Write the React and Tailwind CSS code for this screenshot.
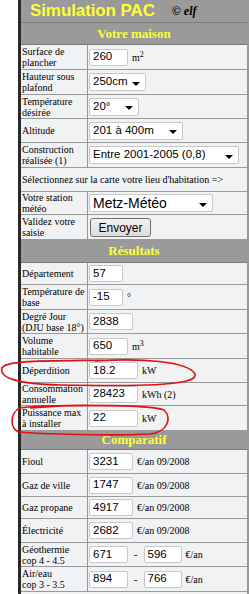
import React from 'react';

const serif = { fontFamily: '"Liberation Serif", "Times New Roman", serif' };

function Field({ value, w }) {
  return (
    <div
      className={`${w} h-[17px] bg-white border border-[#c8c8c8] rounded-[2px] flex items-center pl-[3px] text-[11.5px] text-black font-['Liberation_Sans',Arial,sans-serif]`}
    >
      {value}
    </div>
  );
}

function Select({ value, w, big }) {
  return (
    <div
      className={`${w} h-[18px] bg-white border border-[#c8c8c8] rounded-[2px] flex items-center justify-between pl-[3px] pr-[5px] text-black font-['Liberation_Sans',Arial,sans-serif] ${big ? 'text-[14px]' : 'text-[11.5px]'}`}
    >
      <span>{value}</span>
      <span className="w-0 h-0 mt-[3px] border-x-[4px] border-t-[4px] border-x-transparent border-t-black" />
    </div>
  );
}

function Unit({ children }) {
  return (
    <span className="ml-[4px] text-[10px] text-black" style={serif}>
      {children}
    </span>
  );
}

function Row({ h, label, children }) {
  return (
    <div className={`flex border-b border-[#9a9a9a] ${h}`}>
      <div
        className="w-[67px] shrink-0 border-r border-[#9a9a9a] pl-[1px] flex items-center text-[10px] leading-[11px] text-black"
        style={serif}
      >
        <span>{label}</span>
      </div>
      <div className="flex-1 flex items-center pl-[1px]">{children}</div>
    </div>
  );
}

function Section({ h, children }) {
  return (
    <div
      className={`${h} bg-[#9a9a9a] border-b border-[#7a7a7a] flex items-center justify-center text-[13px] font-bold text-[#ffff33]`}
      style={serif}
    >
      {children}
    </div>
  );
}

const br = (a, b) => (
  <>
    {a}
    <br />
    {b}
  </>
);

export default function App() {
  return (
    <div className="relative w-[249px] h-[594px] bg-white overflow-hidden pl-[18px]">
      <div className="w-[231px] h-[594px] bg-[#f1f2f4] border-l-[3px] border-l-[#2a2a2a] border-r-2 border-r-[#9a9a9a]">
        <div className="h-[23px] bg-[#9a9a9a] border-b border-[#7a7a7a] flex items-center pl-[9px]">
          <span className="text-[17px] font-bold text-[#ffff33] font-['Liberation_Sans',Arial,sans-serif] tracking-[-0.1px]">
            Simulation PAC
          </span>
          <span className="ml-[17px] text-[12px] font-bold italic text-black" style={serif}>
            © elf
          </span>
        </div>

        <Section h="h-[22px]">Votre maison</Section>
        <Row h="h-[25px]" label={br('Surface de', 'plancher')}>
          <Field value="260" w="w-[39px]" />
          <Unit>
            m<sup className="text-[8px]">2</sup>
          </Unit>
        </Row>
        <Row h="h-[25px]" label={br('Hauteur sous', 'plafond')}>
          <Select value="250cm" w="w-[57px]" />
        </Row>
        <Row h="h-[24px]" label={br('Température', 'désirée')}>
          <Select value="20°" w="w-[50px]" />
        </Row>
        <Row h="h-[24px]" label="Altitude">
          <Select value="201 à 400m" w="w-[94px]" />
        </Row>
        <Row h="h-[25px]" label={br('Construction', 'réalisée (1)')}>
          <Select value="Entre 2001-2005 (0,8)" w="w-[150px]" />
        </Row>
        <div
          className="h-[24px] border-b border-[#9a9a9a] flex items-center pl-[1px] text-[10px] text-black"
          style={serif}
        >
          Sélectionnez sur la carte votre lieu d'habitation =&gt;
        </div>
        <Row h="h-[23px]" label={br('Votre station', 'météo')}>
          <Select value="Metz-Météo" w="w-[124px]" big />
        </Row>
        <Row h="h-[25px]" label={br('Validez votre', 'saisie')}>
          <button className="ml-[1px] w-[61px] h-[19px] rounded-[3px] border border-[#707070] bg-gradient-to-b from-[#f2f2f2] to-[#dcdcdc] text-[12px] text-black font-['Liberation_Sans',Arial,sans-serif]">
            Envoyer
          </button>
        </Row>

        <Section h="h-[23px]">Résultats</Section>
        <Row h="h-[22px]" label="Département">
          <Field value="57" w="w-[34px]" />
        </Row>
        <Row h="h-[25px]" label={br('Température de', 'base')}>
          <Field value="-15" w="w-[34px]" />
          <Unit>°</Unit>
        </Row>
        <Row h="h-[24px]" label={br('Degré Jour', '(DJU base 18°)')}>
          <Field value="2838" w="w-[44px]" />
        </Row>
        <Row h="h-[25px]" label={br('Volume', 'habitable')}>
          <Field value="650" w="w-[39px]" />
          <Unit>
            m<sup className="text-[8px]">3</sup>
          </Unit>
        </Row>
        <Row h="h-[24px]" label="Déperdition">
          <Field value="18.2" w="w-[49px]" />
          <Unit>kW</Unit>
        </Row>
        <Row h="h-[23px]" label={br('Consommation', 'annuelle')}>
          <Field value="28423" w="w-[49px]" />
          <Unit>kWh (2)</Unit>
        </Row>
        <Row h="h-[25px]" label={br('Puissance max', 'à installer')}>
          <Field value="22" w="w-[49px]" />
          <Unit>kW</Unit>
        </Row>

        <Section h="h-[19px]">Comparatif</Section>
        <Row h="h-[24px]" label="Fioul">
          <Field value="3231" w="w-[44px]" />
          <Unit>€/an 09/2008</Unit>
        </Row>
        <Row h="h-[23px]" label="Gaz de ville">
          <Field value="1747" w="w-[44px]" />
          <Unit>€/an 09/2008</Unit>
        </Row>
        <Row h="h-[22px]" label="Gaz propane">
          <Field value="4917" w="w-[44px]" />
          <Unit>€/an 09/2008</Unit>
        </Row>
        <Row h="h-[24px]" label="Électricité">
          <Field value="2682" w="w-[44px]" />
          <Unit>€/an 09/2008</Unit>
        </Row>
        <Row h="h-[24px]" label={br('Géothermie', 'cop 4 - 4.5')}>
          <Field value="671" w="w-[39px]" />
          <span className="mx-[6px] text-[11px]">-</span>
          <Field value="596" w="w-[38px]" />
          <Unit>€/an</Unit>
        </Row>
        <Row h="h-[25px]" label={br('Air/eau', 'cop 3 - 3.5')}>
          <Field value="894" w="w-[39px]" />
          <span className="mx-[6px] text-[11px]">-</span>
          <Field value="766" w="w-[38px]" />
          <Unit>€/an</Unit>
        </Row>
      </div>

      <svg className="absolute left-0 top-0 pointer-events-none" width="249" height="594" fill="none">
        <path
          d="M95 361 C140 358 188 361 195 374 C199 387 130 386 60 385 C18 384 -1 378 2 368 C5 360 45 361 112 360"
          stroke="#e01010"
          strokeWidth="1.6"
        />
        <path
          d="M30 408 C80 404 152 405 164 410 C172 418 168 432 150 434 C110 436 40 434 20 432 C9 430 10 412 20 408 C40 405 90 405 122 406"
          stroke="#e01010"
          strokeWidth="1.6"
        />
      </svg>
    </div>
  );
}
